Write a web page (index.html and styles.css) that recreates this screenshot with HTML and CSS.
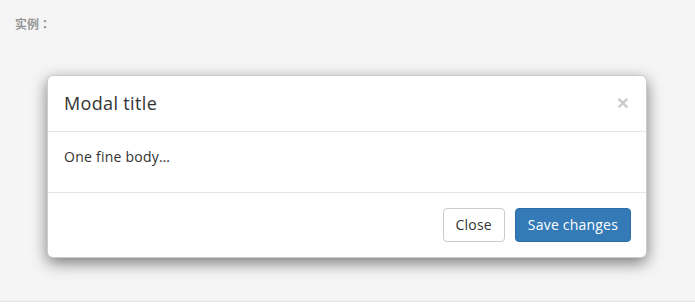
FILE: index.html
```html
<!DOCTYPE html>
<html>
<head>
<meta charset="utf-8">
<link rel="stylesheet" href="styles.css">
</head>
<body>
<div class="example">
  <div class="label">实例<span class="colon">：</span></div>
  <div class="modal">
    <div class="modal-header">
      <h4 class="modal-title">Modal title</h4>
      <button class="close" type="button">×</button>
    </div>
    <div class="modal-body">
      <p>One fine body…</p>
    </div>
    <div class="modal-footer">
      <button class="btn btn-default" type="button">Close</button>
      <button class="btn btn-primary" type="button">Save changes</button>
    </div>
  </div>
</div>
</body>
</html>
```
FILE: styles.css
```css
html, body { margin: 0; padding: 0; background: #fff; }
body { font-family: "Open Sans", "Noto Sans CJK SC", sans-serif; color: #333; }
.example {
  height: 302px;
  box-sizing: border-box;
  background: #f5f5f5;
  border-bottom: 1px solid #e3e3e3;
  padding: 15px 0 0 15px;
}
.label {
  font-family: "Noto Sans CJK SC", sans-serif;
  font-size: 12px;
  font-weight: bold;
  color: #959595;
  line-height: 18px;
}
.label .colon { font-family: "Noto Sans CJK TC", sans-serif; }
.modal {
  width: 600px;
  box-sizing: border-box;
  margin: 42px 0 0 32px;
  background: #fff;
  border: 1px solid rgba(0,0,0,.2);
  border-radius: 6px;
  box-shadow: 0 5px 15px rgba(0,0,0,.5);
}
.modal-header {
  display: flex;
  align-items: center;
  justify-content: space-between;
  padding: 15px 15px 15px 16px;
  border-bottom: 1px solid #e5e5e5;
}
.modal-title {
  margin: 0;
  font-size: 18px;
  font-weight: normal;
  line-height: 25px;
  letter-spacing: .35px;
}
.close {
  padding: 0;
  margin: -2px 2px 0 0;
  border: 0;
  background: transparent;
  font-family: "Liberation Sans", sans-serif;
  font-size: 21px;
  font-weight: bold;
  line-height: 1;
  color: #000;
  opacity: .2;
}
.modal-body { padding: 15px 15px 15px 16px; font-size: 14px; }
.modal-body p { margin: 0 0 10px; line-height: 20px; letter-spacing: .25px; }
.modal-footer {
  display: flex;
  justify-content: flex-end;
  gap: 10px;
  padding: 15px;
  border-top: 1px solid #e5e5e5;
}
.btn {
  font-family: "Open Sans", sans-serif;
  font-size: 14px;
  line-height: 20px;
  padding: 6px 12px;
  letter-spacing: .2px;
  border: 1px solid transparent;
  border-radius: 4px;
}
.btn-default { background: #fff; border-color: #ccc; color: #333; }
.btn-primary { background: #337ab7; border-color: #2e6da4; color: #fff; }
```
